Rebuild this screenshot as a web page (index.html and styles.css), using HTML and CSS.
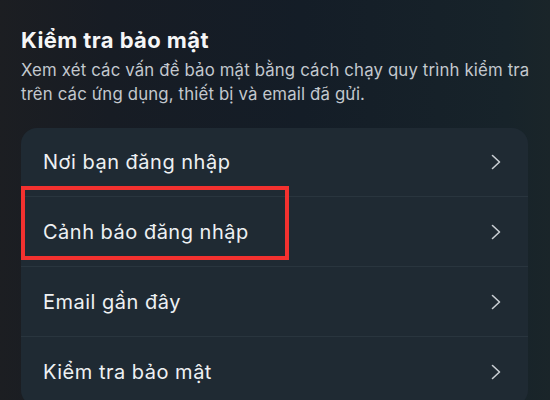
FILE: index.html
```html
<!DOCTYPE html>
<html lang="vi">
<head>
  <meta charset="UTF-8" />
  <meta name="viewport" content="width=device-width, initial-scale=1.0"/>
  <title>Kiểm tra bảo mật</title>
  <link rel="stylesheet" href="styles.css">
</head>
<body>
  <div class="page">
    <h1 class="title">Kiểm tra bảo mật</h1>
    <p class="desc">Xem xét các vấn đề bảo mật bằng cách chạy quy trình kiểm tra trên các ứng dụng, thiết bị và email đã gửi.</p>

    <div class="card">
      <div class="row">
        <span class="label">Nơi bạn đăng nhập</span>
        <svg class="chevron" viewBox="0 0 10 16" width="10" height="16"><path d="M1.5 1.5 L8.5 8 L1.5 14.5" /></svg>
      </div>
      <div class="row highlighted">
        <span class="label">Cảnh báo đăng nhập</span>
        <svg class="chevron" viewBox="0 0 10 16" width="10" height="16"><path d="M1.5 1.5 L8.5 8 L1.5 14.5" /></svg>
        <div class="mark"></div>
      </div>
      <div class="row">
        <span class="label">Email gần đây</span>
        <svg class="chevron" viewBox="0 0 10 16" width="10" height="16"><path d="M1.5 1.5 L8.5 8 L1.5 14.5" /></svg>
      </div>
      <div class="row">
        <span class="label">Kiểm tra bảo mật</span>
        <svg class="chevron" viewBox="0 0 10 16" width="10" height="16"><path d="M1.5 1.5 L8.5 8 L1.5 14.5" /></svg>
      </div>
    </div>
  </div>
</body>
</html>
```

FILE: styles.css
```css
* {
  box-sizing: border-box;
}

html, body {
  height: 100%;
}

body {
  margin: 0;
  font-family: Inter, 'Noto Sans', sans-serif;
  background: linear-gradient(90deg, #1c1e22 0%, #171c24 20%, #141d27 55%, #17232a 92%, #1a2529 100%);
  color: #f1f3f5;
  overflow: hidden;
}

.page {
  padding: 26px 20px 0 21px;
}

.title {
  margin: 0;
  font-size: 22px;
  font-weight: 700;
  line-height: 28px;
  letter-spacing: 0.4px;
  color: #f5f6f7;
}

.desc {
  margin: 4px 0 0;
  font-size: 16.8px;
  line-height: 24px;
  letter-spacing: 0.15px;
  color: #c3c8ce;
}

.card {
  margin-top: 22px;
  margin-right: 2px;
  background-color: #1f2a33;
  border-radius: 16px;
}

.row {
  position: relative;
  display: flex;
  align-items: center;
  justify-content: space-between;
  height: 70px;
  padding: 0 27px 0 22px;
  border-top: 1px solid #29353e;
}

.row:first-child {
  border-top: none;
  height: 68px;
}

.label {
  font-size: 20px;
  letter-spacing: 0.5px;
  color: #eef1f3;
}

.chevron {
  fill: none;
  stroke: #c9ced3;
  stroke-width: 1.6;
  stroke-linecap: round;
  stroke-linejoin: round;
}

.mark {
  position: absolute;
  left: 0;
  top: -11px;
  width: 268px;
  height: 74px;
  border: 4px solid #f3312f;
}
```
